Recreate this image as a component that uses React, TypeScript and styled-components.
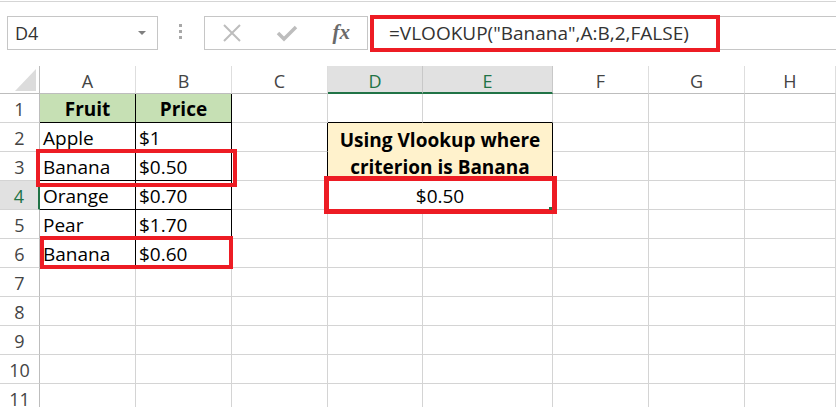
import styled, { createGlobalStyle, css } from 'styled-components'

const GlobalStyle = createGlobalStyle`
  html, body { margin: 0; padding: 0; background: #fff; }
  body { font-family: 'Open Sans', 'Liberation Sans', sans-serif; overflow: hidden; }
`

const RED = '#ed1c24'
const GREEN = '#217346'
const GRID = '#d4d4d4'
const HEAD_LINE = '#bdbdbd'

const Page = styled.div`
  width: 836px;
  height: 407px;
  overflow: hidden;
  padding-top: 1px;
  box-sizing: border-box;
`

const TopRule = styled.div`
  height: 1px;
  background: #d5d5d5;
`

const FormulaBar = styled.div`
  display: flex;
  align-items: flex-start;
  height: 64px;
  box-sizing: border-box;
  padding: 14px 0 0 7px;
`

const NameBox = styled.div`
  width: 151px;
  height: 34px;
  box-sizing: border-box;
  border: 1px solid #c6c6c6;
  display: flex;
  align-items: center;
  justify-content: space-between;
  padding: 0 11px 0 7px;
  font-size: 18px;
  color: #333;
`

const DropArrow = styled.span`
  width: 0;
  height: 0;
  border-left: 4px solid transparent;
  border-right: 4px solid transparent;
  border-top: 4px solid #808080;
`

const Grip = styled.div`
  width: 3px;
  margin: 8px 22px 0 21px;
  display: flex;
  flex-direction: column;
  gap: 3px;

  span {
    width: 3px;
    height: 3px;
    background: #a8a8a8;
  }
`

const ButtonsBox = styled.div`
  width: 164px;
  height: 34px;
  box-sizing: border-box;
  border: 1px solid #c6c6c6;
  display: flex;
  align-items: center;
  justify-content: space-around;
`

const Fx = styled.span`
  font-family: 'Liberation Serif', 'DejaVu Serif', serif;
  font-style: italic;
  font-weight: 700;
  font-size: 21px;
  color: #6a6a6a;
  margin-top: -2px;
`

const FormulaInput = styled.div`
  flex: 1;
  margin-left: 2px;
  height: 34px;
  box-sizing: border-box;
  border-top: 1px solid #c6c6c6;
  border-bottom: 1px solid #c6c6c6;
  display: flex;
  align-items: center;
`

const FormulaMark = styled.div`
  width: 350px;
  height: 37px;
  flex: none;
  box-sizing: border-box;
  border: 4px solid ${RED};
  padding-left: 15px;
  display: flex;
  align-items: center;
  font-size: 19px;
  color: #333;
  white-space: nowrap;
`

const Sheet = styled.div`
  position: relative;
  display: grid;
  grid-template-columns: 40px 96px 96px 96px 95px 130px 96px 96px 1fr;
  grid-template-rows: 28px;
  grid-auto-rows: 29px;
`

const Corner = styled.div`
  position: relative;
  box-sizing: border-box;
  border-right: 1px solid ${HEAD_LINE};
  border-bottom: 1px solid ${HEAD_LINE};

  &::after {
    content: '';
    position: absolute;
    right: 3px;
    bottom: 2px;
    width: 21px;
    height: 22px;
    background: #dcdcdc;
    clip-path: polygon(100% 0, 100% 100%, 0 100%);
  }
`

const ColHead = styled.div<{ $active?: boolean }>`
  box-sizing: border-box;
  border-right: 1px solid #dedede;
  border-bottom: 1px solid ${HEAD_LINE};
  text-align: center;
  font-size: 18px;
  line-height: 25px;
  padding-top: 3px;
  color: #444;
  ${(p) =>
    p.$active &&
    css`
      background: #e1e1e1;
      color: ${GREEN};
      border-bottom: 2px solid ${GREEN};
      border-right-color: #c8c8c8;
    `}
`

const RowHead = styled.div<{ $active?: boolean }>`
  box-sizing: border-box;
  border-right: 1px solid ${HEAD_LINE};
  border-bottom: 1px solid ${GRID};
  text-align: center;
  font-size: 18px;
  line-height: 25px;
  padding-top: 3px;
  color: #444;
  ${(p) =>
    p.$active &&
    css`
      background: #e1e1e1;
      color: ${GREEN};
      border-right: 2px solid ${GREEN};
    `}
`

const Cell = styled.div<{
  $fill?: string
  $bold?: boolean
  $center?: boolean
  $r?: boolean
  $b?: boolean
  $cols?: number
  $rows?: number
}>`
  box-sizing: border-box;
  border-right: 1px solid ${(p) => (p.$r ? '#000' : GRID)};
  border-bottom: 1px solid ${(p) => (p.$b ? '#000' : GRID)};
  background: ${(p) => p.$fill || 'transparent'};
  font-family: 'Open Sans', 'Liberation Sans', sans-serif;
  font-size: 19px;
  line-height: 25px;
  padding-top: 3px;
  font-weight: ${(p) => (p.$bold ? 700 : 400)};
  text-align: ${(p) => (p.$center ? 'center' : 'left')};
  padding-left: ${(p) => (p.$center ? 0 : 3)}px;
  color: #000;
  white-space: nowrap;
  overflow: visible;
  grid-column: span ${(p) => p.$cols || 1};
  grid-row: span ${(p) => p.$rows || 1};
`

const NoteCell = styled(Cell)`
  display: flex;
  flex-direction: column;
  justify-content: center;
  line-height: 27px;
  padding-top: 4px;
`

const Mark = styled.div<{ $w?: number }>`
  position: absolute;
  box-sizing: border-box;
  border: ${(p) => p.$w || 4}px solid ${RED};
  pointer-events: none;
`

const FillHandle = styled.div`
  position: absolute;
  left: 549px;
  top: 141px;
  width: 3px;
  height: 3px;
  background: ${GREEN};
`

const COLS = ['A', 'B', 'C', 'D', 'E', 'F', 'G', 'H']

const table: Record<string, string> = {
  A1: 'Fruit',
  B1: 'Price',
  A2: 'Apple',
  B2: '$1',
  A3: 'Banana',
  B3: '$0.50',
  A4: 'Orange',
  B4: '$0.70',
  A5: 'Pear',
  B5: '$1.70',
  A6: 'Banana',
  B6: '$0.60',
}

const covered = new Set(['E2', 'D3', 'E3', 'E4'])

function renderCell(col: string, row: number) {
  const key = col + row
  if (covered.has(key)) return null
  const inTable = (col === 'A' || col === 'B') && row <= 6

  if (key === 'D2') {
    return (
      <NoteCell key={key} $cols={2} $rows={2} $fill='#fff2cc' $bold $center $r $b>
        <span>Using Vlookup where</span>
        <span>criterion is Banana</span>
      </NoteCell>
    )
  }
  if (key === 'D4') {
    return (
      <Cell key={key} $cols={2} $center>
        $0.50
      </Cell>
    )
  }
  if (inTable) {
    return (
      <Cell key={key} $r $b $bold={row === 1} $center={row === 1} $fill={row === 1 ? '#c6e0b4' : undefined}>
        {table[key]}
      </Cell>
    )
  }
  return <Cell key={key} $r={col === 'C' && (row === 2 || row === 3)} $b={row === 1 && (col === 'D' || col === 'E')} />
}

function XIcon() {
  return (
    <svg width='20' height='18' viewBox='0 0 20 18'>
      <path d='M2 1 L18 17 M18 1 L2 17' stroke='#bdbdbd' strokeWidth='2' fill='none' />
    </svg>
  )
}

function CheckIcon() {
  return (
    <svg width='22' height='18' viewBox='0 0 22 18'>
      <path d='M2 9 L8 15 L20 3' stroke='#bdbdbd' strokeWidth='3.5' fill='none' />
    </svg>
  )
}

export default function App() {
  const rows = Array.from({ length: 11 }, (_, i) => i + 1)
  return (
    <Page>
      <GlobalStyle />
      <TopRule />
      <FormulaBar>
        <NameBox>
          D4
          <DropArrow />
        </NameBox>
        <Grip>
          <span />
          <span />
          <span />
        </Grip>
        <ButtonsBox>
          <XIcon />
          <CheckIcon />
          <Fx>fx</Fx>
        </ButtonsBox>
        <FormulaInput>
          <FormulaMark>=VLOOKUP("Banana",A:B,2,FALSE)</FormulaMark>
        </FormulaInput>
      </FormulaBar>
      <Sheet>
        <Corner />
        {COLS.map((c) => (
          <ColHead key={c} $active={c === 'D' || c === 'E'}>
            {c}
          </ColHead>
        ))}
        {rows.map((r) => [
          <RowHead key={'r' + r} $active={r === 4}>
            {r}
          </RowHead>,
          ...COLS.map((c) => renderCell(c, r)),
        ])}
        <Mark style={{ left: 36, top: 83, width: 201, height: 38 }} />
        <Mark style={{ left: 40, top: 170, width: 193, height: 33 }} />
        <Mark $w={5} style={{ left: 324, top: 110, width: 233, height: 38 }} />
        <FillHandle />
      </Sheet>
    </Page>
  )
}
